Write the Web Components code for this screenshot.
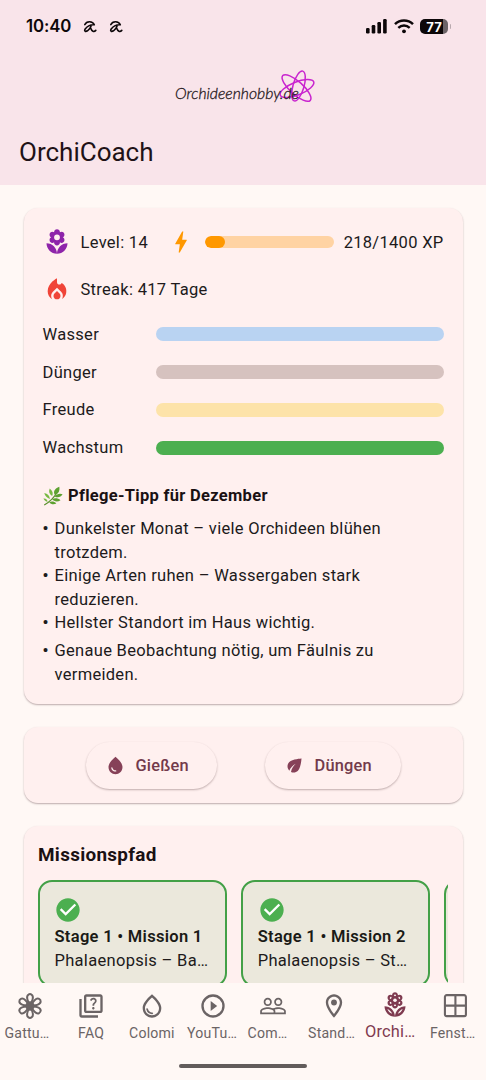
<!DOCTYPE html>
<html lang="de">
<head>
<meta charset="utf-8">
<title>OrchiCoach</title>
<style>
html,body{margin:0;padding:0}
body{width:486px;height:1080px;overflow:hidden;background:#fff8f5;font-family:Roboto,"Noto Sans",sans-serif;font-size:16.500px;letter-spacing:.3px;color:#201a1b}
</style>
</head>
<body>
<coach-app></coach-app>
<script>
const define = (name, render) => customElements.define(name, class extends HTMLElement {
  constructor() { super(); this.attachShadow({ mode: 'open' }); }
  connectedCallback() {
    const t = document.createElement('template');
    t.innerHTML = render(this);
    this.shadowRoot.replaceChildren(t.content.cloneNode(true));
  }
});

const FLOWER = 'M5.6 10.25c0 1.38 1.12 2.5 2.5 2.5.53 0 1.01-.16 1.42-.44l-.02.19c0 1.38 1.12 2.5 2.5 2.5s2.5-1.12 2.5-2.5l-.02-.19c.4.28.89.44 1.42.44 1.38 0 2.5-1.12 2.5-2.5 0-1-.59-1.85-1.43-2.25.84-.4 1.43-1.25 1.43-2.25 0-1.38-1.12-2.5-2.5-2.5-.53 0-1.01.16-1.42.44l.02-.19C14.5 2.12 13.38 1 12 1S9.5 2.12 9.5 3.5l.02.19c-.4-.28-.89-.44-1.42-.44-1.38 0-2.5 1.12-2.5 2.5 0 1 .59 1.85 1.43 2.25-.84.4-1.43 1.25-1.43 2.25z';
const DROP_SHINE = 'M7.83 14c.37 0 .67.26.74.62.41 2.22 2.28 2.98 3.64 2.87.43-.02.79.32.79.75 0 .4-.32.73-.72.75-2.13.13-4.62-1.09-5.19-4.12-.08-.45.28-.87.74-.87z';
const petals = [0, 60, 120, 180, 240, 300];
const ICONS = {
  florist: `<path d="M12 22c4.97 0 9-4.03 9-9-4.97 0-9 4.03-9 9zM3 13c0 4.97 4.03 9 9 9 0-4.97-4.03-9-9-9z"/><path fill-rule="evenodd" d="${FLOWER}M12 5.5a2.5 2.5 0 1 0 0 5 2.5 2.5 0 0 0 0-5z"/>`,
  floristOutline: `<path fill-rule="evenodd" d="M12 22c4.97 0 9-4.03 9-9-4.97 0-9 4.03-9 9zm2.44-2.44c.71-1.9 2.22-3.42 4.12-4.12-.71 1.9-2.22 3.41-4.12 4.12zM3 13c0 4.97 4.03 9 9 9 0-4.97-4.03-9-9-9zm2.44 2.44c1.9.71 3.42 2.22 4.12 4.12-1.9-.71-3.41-2.22-4.12-4.12z"/><path d="${FLOWER}"/><g fill="#fff8f5"><circle cx="12" cy="8" r="1.5"/>${petals.map(a => `<ellipse cx="12" cy="3.7" rx=".95" ry=".7" transform="rotate(${a} 12 8)"/>`).join('')}</g>`,
  bolt: '<path d="M11 21h-1l1-7H7.5c-.58 0-.57-.32-.38-.66.19-.34.05-.08.07-.12C8.48 10.94 10.42 7.54 13 3h1l-1 7h3.5c.49 0 .56.33.47.51l-.07.15C12.96 17.55 11 21 11 21z"/>',
  fire: '<path d="M12 12.9l-2.13 2.09C9.31 15.55 9 16.28 9 17.06 9 18.68 10.35 20 12 20s3-1.32 3-2.94c0-.78-.31-1.52-.87-2.07L12 12.9z"/><path d="M16 6l-.44.55C14.38 8.02 12 7.19 12 5.3V2S4 6 4 13c0 2.92 1.56 5.47 3.89 6.86-.56-.79-.89-1.76-.89-2.8 0-1.32.52-2.56 1.47-3.5L12 10.1l3.53 3.47c.95.93 1.47 2.17 1.47 3.5 0 1.02-.31 1.96-.85 2.75 1.89-1.15 3.29-3.06 3.71-5.3.66-3.55-.88-6.9-3.86-8.52z"/>',
  drop: `<path fill-rule="evenodd" d="M12 2c-5.33 4.55-8 8.48-8 11.8 0 4.98 3.8 8.2 8 8.2s8-3.22 8-8.2c0-3.32-2.67-7.25-8-11.8z${DROP_SHINE}"/>`,
  dropOutline: `<path fill-rule="evenodd" d="M12 2c-5.33 4.55-8 8.48-8 11.8 0 4.98 3.8 8.2 8 8.2s8-3.22 8-8.2c0-3.32-2.67-7.25-8-11.8zm0 18c-3.35 0-6-2.57-6-6.2 0-2.34 1.95-5.44 6-9.14 4.05 3.7 6 6.79 6 9.14 0 3.63-2.65 6.2-6 6.2z"/><path d="${DROP_SHINE}"/>`,
  eco: '<path d="M6.05 8.05c-2.73 2.73-2.73 7.15-.02 9.88 1.47-3.4 4.09-6.24 7.36-7.93-2.77 2.34-4.71 5.61-5.39 9.32 2.6 1.23 5.8.78 7.95-1.37C19.43 14.47 20 4 20 4S9.53 4.57 6.05 8.05z"/>',
  check: '<circle cx="12" cy="12" r="9" fill="#fff"/><path fill-rule="evenodd" d="M12 2C6.48 2 2 6.48 2 12s4.48 10 10 10 10-4.48 10-10S17.52 2 12 2zm-2 15l-5-5 1.41-1.41L10 14.17l7.59-7.59L19 8l-9 9z"/>',
  quiz: '<path d="M4 6H2v14c0 1.1.9 2 2 2h14v-2H4V6z"/><path fill-rule="evenodd" d="M20 2H8c-1.1 0-2 .9-2 2v12c0 1.1.9 2 2 2h12c1.1 0 2-.9 2-2V4c0-1.1-.9-2-2-2zm0 14H8V4h12v12z"/><path d="M13.51 10.16c.41-.73 1.18-1.16 1.63-1.8.48-.68.21-1.94-1.14-1.94-.88 0-1.32.67-1.5 1.23l-1.37-.57C11.51 5.96 12.52 5 13.99 5c1.23 0 2.08.56 2.51 1.26.37.6.58 1.73.01 2.57-.63.93-1.23 1.21-1.56 1.81-.13.24-.18.4-.18 1.18h-1.52c.01-.41-.06-1.08.26-1.66zm-.56 3.79c0-.59.47-1.04 1.05-1.04.59 0 1.04.45 1.04 1.04 0 .58-.44 1.05-1.04 1.05-.58 0-1.05-.47-1.05-1.05z"/>',
  play: '<circle cx="12" cy="12" r="9" fill="none" stroke="currentColor" stroke-width="2"/><path d="M10 16.2l5.6-4.2L10 7.8z"/>',
  people: '<path fill-rule="evenodd" d="M16.5 13c-1.2 0-3.07.34-4.5 1-1.43-.67-3.3-1-4.5-1C5.33 13 1 14.08 1 16.25V19h22v-2.75c0-2.17-4.33-3.25-6.5-3.25zm-4 4.5h-10v-1.25c0-.54 2.56-1.75 5-1.75s5 1.21 5 1.75v1.25zm9 0H14v-1.25c0-.46-.2-.86-.52-1.22.88-.3 1.96-.53 3.02-.53 2.44 0 5 1.21 5 1.75v1.25zM7.5 12c1.93 0 3.5-1.57 3.5-3.5S9.43 5 7.5 5 4 6.57 4 8.5 5.57 12 7.5 12zm0-5.5c1.1 0 2 .9 2 2s-.9 2-2 2-2-.9-2-2 .9-2 2-2zm9 5.5c1.93 0 3.5-1.57 3.5-3.5S18.43 5 16.5 5 13 6.57 13 8.5s1.57 3.5 3.5 3.5zm0-5.5c1.1 0 2 .9 2 2s-.9 2-2 2-2-.9-2-2 .9-2 2-2z"/>',
  place: '<path fill-rule="evenodd" d="M12 2C8.13 2 5 5.13 5 9c0 5.25 7 13 7 13s7-7.75 7-13c0-3.87-3.13-7-7-7zM7 9c0-2.76 2.24-5 5-5s5 2.24 5 5c0 2.88-2.88 7.19-5 9.88C9.92 16.21 7 11.85 7 9z"/><circle cx="12" cy="9" r="2.5"/>',
  window: '<path fill="none" stroke="currentColor" stroke-width="1.800" stroke-linejoin="round" d="M4 2.700h15A1.500 1.500 0 0 1 20.500 4.200v15a1.500 1.500 0 0 1-1.500 1.500h-15A1.500 1.500 0 0 1 2.500 19.200v-15A1.500 1.500 0 0 1 4 2.700zM11.500 2.700v18M2.500 11.700h18"/>',
  blossom: `<g fill="none" stroke="currentColor" stroke-width="1.700" stroke-linejoin="round">${petals.map(a => `<path d="M12 10.500C10 8.500 8.300 3.600 10.700 2.200Q12 1.300 13.300 2.200C15.700 3.600 14 8.500 12 10.500z" transform="rotate(${a} 12 12)"/>`).join('')}</g><circle cx="12" cy="12" r="4"/>`,
  herb: `<path d="M2 22.500C8 19 14 13 18 6" stroke="#5b8f2e" stroke-width="1.500" fill="none" stroke-linecap="round"/>
    <g fill="#5da130"><path d="M14 10.500C12 7 14 3 19.500 1c1 5-1 8.500-5.500 9.500z"/><path d="M14 12.500c2.500-3 6.500-4 9.500-2.500-2 3.500-6 4.500-9.500 2.500z"/><path d="M11 16c3-2 7-1.500 10 1-3.500 2.500-7.500 2-10-1z"/><path d="M7.500 19.500c3-1.500 6-1 8.500 1.500-3 1.800-6.500 1-8.500-1.500z"/></g>
    <g fill="#78b943"><path d="M11 12C7.500 10 6.500 6.500 8 3c3.500 2.500 4.500 5.500 3 9z"/><path d="M8.300 15.500C5 14.500 2.300 12 1.500 8.500c4 .5 6.500 3.500 6.800 7z"/><path d="M5.500 19C3.300 18.500 1.500 17.500.5 15c2.800-.5 4.800 1 5 4z"/></g>`
};
define('md-icon', el => `<style>:host{display:block;flex:none;width:var(--size,28px);height:var(--size,28px)}svg{display:block;width:100%;height:100%}</style>
<svg viewBox="0 0 24 24" fill="currentColor">${ICONS[el.getAttribute('name')]}</svg>`);

define('status-bar', () => `<style>
:host{display:flex;align-items:center;height:53px;padding:0 34px 0 26px;box-sizing:border-box;color:#0d0709}
.time{font:600 16.800px/53px Inter,sans-serif;letter-spacing:-.1px;width:57px}
.mark{width:14px;height:13px;margin-right:12px}
.right{margin-left:auto;display:flex;align-items:center;gap:6.500px}
.bat{width:28px;height:15.500px;border-radius:5px;background:linear-gradient(90deg,#0d0709 82%,#6d6468 82%);color:#fff;font:700 13px/16px Inter,sans-serif;letter-spacing:0;text-align:center}
.nub{width:1.500px;height:5px;border-radius:0 2px 2px 0;background:#b9a9ae;margin:0 1px 0 -5px}
svg{display:block}
</style><span class="time">10:40</span>
${'<svg class="mark" viewBox="0 0 14 13" fill="none" stroke="currentColor" stroke-width="1.600" stroke-linecap="round" stroke-linejoin="round"><path d="M1.800 4.600C3.500 1 9.500.5 11.300 4.800 8 4.600 4.500 5.800 2 9.200 1 11.200 2.500 12 4.500 10.800 6.300 9.600 7.400 8 8 6.200M7.600 8c1.200 3.500 3.400 4.400 5.200 2.400"/></svg>'.repeat(2)}
<span class="right"><svg width="21" height="15" viewBox="0 0 21 15" fill="currentColor"><rect x="0" y="9" width="3.600" height="5.500" rx="1.200"/><rect x="5.700" y="6" width="3.600" height="8.500" rx="1.200"/><rect x="11.400" y="3" width="3.600" height="11.500" rx="1.200"/><rect x="17.100" y="0" width="3.600" height="14.500" rx="1.200"/></svg>
<svg width="20" height="15" viewBox="0 0 20 15" fill="none" stroke="currentColor" stroke-width="2.500"><path d="M1 5.200c5-4.900 13-4.900 18 0M4.300 8.800c3.300-3 8.100-3 11.400 0"/><circle cx="10" cy="12.300" r="1.900" fill="currentColor" stroke="none"/></svg>
<span class="bat">77</span><span class="nub"></span></span>`);

define('app-header', () => `<style>
:host{display:block;height:185px;background:#f9e4ea}
.logo{display:block;margin:11px auto 0;width:144px;height:44px;overflow:visible}
h1{margin:25px 0 0 19px;font-weight:400;font-size:26px;line-height:38px;letter-spacing:0;color:#1f1217}
</style><status-bar></status-bar>
<svg class="logo" viewBox="171 64 144 44">
<g fill="none" stroke="#c925cf" stroke-width="1.500"><ellipse cx="298.500" cy="86" rx="15.500" ry="5.500" transform="rotate(-74 298.500 86)"/><ellipse cx="296.500" cy="88" rx="18.500" ry="6.500" transform="rotate(42 296.500 88)"/><ellipse cx="297" cy="88.500" rx="18" ry="6.500" transform="rotate(-22 297 88.500)"/></g>
<text x="175" y="99" textLength="124" lengthAdjust="spacingAndGlyphs" font-family="Lato" font-style="italic" font-weight="300" font-size="15.500" fill="#251820" stroke="#251820" stroke-width=".3" letter-spacing="0">Orchideenhobby.de</text></svg>
<h1>OrchiCoach</h1>`);

define('info-card', () => `<style>:host{display:block;box-sizing:border-box;border-radius:14px;background:#fff0ef;box-shadow:0 1px 2px rgba(60,30,35,.28),0 1px 1px rgba(60,30,35,.08)}</style><slot></slot>`);

define('progress-bar', el => `<style>:host{display:block;flex:1;height:14px;border-radius:7px;background:var(--track);overflow:hidden}i{display:block;height:100%;border-radius:7px;background:var(--fill);width:${el.getAttribute('value') || 0}%}</style><i></i>`);

define('level-rows', () => `<style>
:host{display:block}
.row{display:flex;align-items:center;height:28px}
.streak{margin-top:19.500px}
.lbl{margin-left:10px}
.l1{width:89px}
progress-bar{height:12px;margin:0 10px 0 10px;--track:#ffd3a3;--fill:#ff9800}
</style>
<div class="row"><md-icon name="florist" style="color:#8e24aa"></md-icon><span class="lbl l1">Level: 14</span><md-icon name="bolt" style="color:#ff9800;margin-left:-3px"></md-icon><progress-bar value="15.600"></progress-bar><span>218/1400 XP</span></div>
<div class="row streak"><md-icon name="fire" style="color:#f04438"></md-icon><span class="lbl">Streak: 417 Tage</span></div>`);

define('stat-row', el => `<style>:host{display:flex;align-items:center;height:37.800px}span{width:113px}progress-bar{--track:${el.getAttribute('color')}}</style><span>${el.getAttribute('label')}</span><progress-bar></progress-bar>`);

define('care-tip', () => `<style>
:host{display:block}
h2{display:flex;align-items:center;gap:5.500px;margin:0;font-size:16.500px;line-height:24px;font-weight:700;color:#1a1113}
h2 md-icon{--size:20px}
ul{list-style:none;margin:9px 0 0;padding:0}
li{display:flex;line-height:23.600px}
li::before{content:"•";width:12px;flex:none;font-weight:700}
li:nth-child(3){margin-bottom:4px}
</style><h2><md-icon name="herb"></md-icon>Pflege-Tipp für Dezember</h2>
<ul><li><span>Dunkelster Monat – viele Orchideen blühen<br>trotzdem.</span></li><li><span>Einige Arten ruhen – Wassergaben stark<br>reduzieren.</span></li><li><span>Hellster Standort im Haus wichtig.</span></li><li><span>Genaue Beobachtung nötig, um Fäulnis zu<br>vermeiden.</span></li></ul>`);

define('pill-button', el => `<style>
:host{display:block}
button{all:unset;box-sizing:border-box;display:flex;align-items:center;gap:10px;width:100%;height:47px;padding-left:19px;border-radius:24px;background:#fff0ef;color:#733a4b;font-size:16.400px;letter-spacing:.2px;font-weight:500;box-shadow:0 1px 2px rgba(60,30,35,.32)}
md-icon{--size:21px;color:#864158}
</style><button><md-icon name="${el.getAttribute('icon')}"></md-icon><slot></slot></button>`);

define('mission-card', () => `<style>
:host{display:block;flex:none;box-sizing:border-box;width:189px;height:107px;padding:14.300px 14.500px 0;border:2.300px solid #43a047;border-radius:14px;background:#ebe8dc;line-height:23.500px;white-space:nowrap}
md-icon{color:#4caf50;margin:0 0 1px -.2px}
b{display:block;font-weight:600;color:#1a1a16}
</style><md-icon name="check"></md-icon><b><slot name="title"></slot></b><slot></slot>`);

define('nav-item', el => {
  const on = el.hasAttribute('active');
  return `<style>
:host{display:flex;flex-direction:column;align-items:center;flex:1 1 0;min-width:0;padding-top:${on ? 8 : 8.5}px;color:${on ? '#7f3b50' : '#6b6465'}}
span{font-size:${on ? 16.4 : 14.1}px;line-height:20px;margin-top:${on ? 3 : 3.5}px;margin-right:${el.getAttribute('inset') || 0}px;letter-spacing:.2px;white-space:nowrap}
</style><md-icon name="${el.getAttribute('icon')}"></md-icon><span><slot></slot></span>`;
});

define('nav-bar', () => `<style>
:host{display:block;height:97px;background:#fff8f5}
nav{display:flex;height:80px}
.home{width:128px;height:4.500px;border-radius:3px;background:#625c5b;margin:.5px auto 0}
</style><nav><slot></slot></nav><div class="home"></div>`);

define('coach-app', () => `<style>
:host{display:grid;grid-template-rows:185px 798px 97px;height:1080px}
main{overflow:hidden;padding:23px 23.500px 0;display:flex;flex-direction:column}
info-card{flex:none}
.status{height:496px;padding:20px 19px 0 19px}
.stats{margin-top:11.900px}
care-tip{margin-top:17.500px}
.actions{margin-top:23px;height:76px;display:flex;justify-content:center;gap:47.500px;padding-top:15px}
.path{margin-top:23px;height:260px;padding:17px 14.500px 0}
.path h2{margin:0;font-size:18.900px;line-height:24px;font-weight:700;letter-spacing:.3px;color:#1a1113}
.track{margin-top:13px;display:flex;gap:14.200px;overflow:hidden}
</style>
<app-header></app-header>
<main>
<info-card class="status"><level-rows></level-rows>
<div class="stats"><stat-row label="Wasser" color="#b9d3f2"></stat-row><stat-row label="Dünger" color="#d6c2bf"></stat-row><stat-row label="Freude" color="#fde3a9"></stat-row><stat-row label="Wachstum" color="#4caf50"></stat-row></div>
<care-tip></care-tip></info-card>
<info-card class="actions"><pill-button icon="drop" style="width:131.500px">Gießen</pill-button><pill-button icon="eco" style="width:136px">Düngen</pill-button></info-card>
<info-card class="path"><h2>Missionspfad</h2><div class="track">
<mission-card><span slot="title">Stage 1 • Mission 1</span>Phalaenopsis – Ba…</mission-card>
<mission-card><span slot="title">Stage 1 • Mission 2</span>Phalaenopsis – St…</mission-card>
<mission-card></mission-card></div></info-card>
</main>
<nav-bar><nav-item icon="blossom" inset="6.800">Gattu…</nav-item><nav-item icon="quiz">FAQ</nav-item><nav-item icon="dropOutline">Colomi</nav-item><nav-item icon="play" inset="1.200">YouTu…</nav-item><nav-item icon="people" inset="11.800">Com…</nav-item><nav-item icon="place" inset="5">Stand…</nav-item><nav-item icon="floristOutline" inset="9.500" active>Orchi…</nav-item><nav-item icon="window" inset="6">Fenst…</nav-item></nav-bar>`);
</script>
</body>
</html>
